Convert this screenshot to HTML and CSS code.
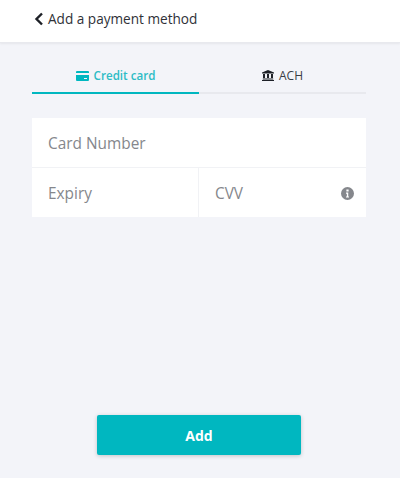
FILE: index.html
```html
<html lang="en">
<head>
    <meta charset="UTF-8">
    <meta name="viewport" content="width=device-width, initial-scale=1.0">
    <title>Add a payment method</title>
    <link rel="stylesheet" href="styles.css">
</head>
<body>
    <div class="header">
        <svg class="back-icon" viewBox="0 0 10 14"><path d="M8 1.500 2.500 7 8 12.500" /></svg>
        <span>Add a payment method</span>
    </div>
    <div class="content">
        <div class="tabs">
            <div class="tab active">
                <svg class="tab-icon" viewBox="0 0 13 10"><path d="M1 0h11a1 1 0 0 1 1 1v1H0V1a1 1 0 0 1 1-1zM0 4h13v5a1 1 0 0 1-1 1H1a1 1 0 0 1-1-1zm8 3v1h3V7z" /></svg>
                <span>Credit card</span>
            </div>
            <div class="tab">
                <svg class="tab-icon" viewBox="0 0 12 11"><path d="M6 0l6 2.400V3.500H0V2.400zM1 4h2v4H1zM5 4h2v4H5zM9 4h2v4H9zM.8 8.500h10.400v1H.8zM0 10h12v1H0z" /></svg>
                <span>ACH</span>
            </div>
        </div>
        <div class="card-form">
            <div class="field number">Card Number</div>
            <div class="row">
                <div class="field expiry">Expiry</div>
                <div class="field cvv">
                    <span>CVV</span>
                    <svg class="info-icon" viewBox="0 0 14 14"><path fill-rule="evenodd" d="M7 0a7 7 0 1 1 0 14A7 7 0 0 1 7 0zM5.800 2.800v2h2.400v-2zM5.400 6v1.200h.9v3h-.9v1.200h3.200v-1.200h-.8V6z" /></svg>
                </div>
            </div>
        </div>
        <button class="add-btn">Add</button>
    </div>
</body>
</html>
```

FILE: styles.css
```css
* { box-sizing: border-box; }
body {
    font-family: 'Open Sans', 'Noto Sans', sans-serif;
    margin: 0;
    height: 478px;
    overflow: hidden;
    background: #f3f4f9;
    display: flex;
    flex-direction: column;
}
.header {
    height: 43px;
    padding: 0 0 5px 34px;
    display: flex;
    align-items: center;
    gap: 4px;
    background: #fff;
    border-bottom: 1px solid #e8e9ee;
    box-shadow: 0 1px 2px rgba(0, 0, 0, 0.06);
    font-size: 13.6px;
    color: #2f3137;
}
.back-icon { width: 10px; height: 14px; fill: none; stroke: #1d2027; stroke-width: 2.4; }
.content {
    flex: 1;
    padding: 0 34px 23px 32px;
    display: flex;
    flex-direction: column;
}
.tabs { display: flex; margin-top: 22px; }
.tab {
    flex: 1;
    height: 29px;
    padding-bottom: 6px;
    display: flex;
    justify-content: center;
    align-items: center;
    gap: 5px;
    font-size: 12px;
    color: #3a3d45;
    border-bottom: 2px solid #e8e9ee;
}
.tab.active { color: #2cbcc5; border-bottom-color: #00b7c0; font-size: 11.6px; font-weight: 600; }
.tab-icon { width: 12px; height: 11px; fill: #1d2027; }
.tab.active .tab-icon { width: 13px; fill: #00b7c0; height: 10px; }
.card-form { margin-top: 24px; background: #fff; }
.field {
    height: 49px;
    padding: 1px 0 0 16px;
    display: flex;
    align-items: center;
    font-size: 15.4px;
    color: #85878c;
}
.row { display: flex; border-top: 1px solid #f1f2f5; }
.expiry { width: 167px; border-right: 1px solid #f1f2f5; }
.cvv { flex: 1; justify-content: space-between; padding-right: 12px; }
.info-icon { width: 13px; height: 13px; fill: #85878c; }
.add-btn {
    margin: auto auto 0;
    width: 204px;
    height: 40px;
    border: none;
    border-radius: 2px;
    background: #00b7c0;
    box-shadow: 0 1px 4px rgba(0, 0, 0, 0.2);
    color: #fff;
    font-family: inherit;
    font-size: 14px;
    font-weight: 700;
}
```
